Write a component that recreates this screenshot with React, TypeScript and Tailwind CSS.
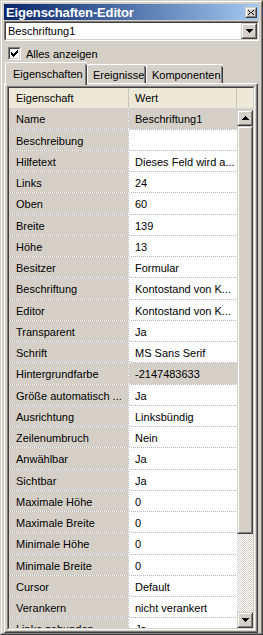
import React from "react";

type Row = { k: string; v: string; gray?: boolean };

const rows: Row[] = [
  { k: "Name", v: "Beschriftung1", gray: true },
  { k: "Beschreibung", v: "" },
  { k: "Hilfetext", v: "Dieses Feld wird a..." },
  { k: "Links", v: "24" },
  { k: "Oben", v: "60" },
  { k: "Breite", v: "139" },
  { k: "Höhe", v: "13" },
  { k: "Besitzer", v: "Formular" },
  { k: "Beschriftung", v: "Kontostand von K..." },
  { k: "Editor", v: "Kontostand von K..." },
  { k: "Transparent", v: "Ja" },
  { k: "Schrift", v: "MS Sans Serif" },
  { k: "Hintergrundfarbe", v: "-2147483633", gray: true },
  { k: "Größe automatisch ...", v: "Ja" },
  { k: "Ausrichtung", v: "Linksbündig" },
  { k: "Zeilenumbruch", v: "Nein" },
  { k: "Anwählbar", v: "Ja" },
  { k: "Sichtbar", v: "Ja" },
  { k: "Maximale Höhe", v: "0" },
  { k: "Maximale Breite", v: "0" },
  { k: "Minimale Höhe", v: "0" },
  { k: "Minimale Breite", v: "0" },
  { k: "Cursor", v: "Default" },
  { k: "Verankern", v: "nicht verankert" },
  { k: "Links gebunden", v: "Ja" },
];

function Raised({ className = "", children }: { className?: string; children?: React.ReactNode }) {
  return (
    <div className={"border border-t-[#d4d0c8] border-l-[#d4d0c8] border-r-[#404040] border-b-[#404040] " + className}>
      <div className="w-full h-full border border-t-white border-l-white border-r-[#808080] border-b-[#808080] bg-[#d4d0c8] flex items-center justify-center">
        {children}
      </div>
    </div>
  );
}

function TriDown() {
  return (
    <svg width="7" height="4" viewBox="0 0 7 4" shapeRendering="crispEdges">
      <path d="M0 0h7v1H0zM1 1h5v1H1zM2 2h3v1H2zM3 3h1v1H3z" fill="#000" />
    </svg>
  );
}

function TriUp() {
  return (
    <svg width="7" height="4" viewBox="0 0 7 4" shapeRendering="crispEdges">
      <path d="M3 0h1v1H3zM2 1h3v1H2zM1 2h5v1H1zM0 3h7v1H0z" fill="#000" />
    </svg>
  );
}

export default function App() {
  return (
    <div className="w-[263px] h-[635px] bg-[#d4d0c8] overflow-hidden font-['Liberation_Sans',Arial,sans-serif] text-[11px] leading-none text-black">
      <div className="h-full border border-t-[#d4d0c8] border-l-[#d4d0c8] border-r-[#404040] border-b-[#404040]">
        <div className="h-full border border-t-white border-l-white border-r-[#808080] border-b-[#808080] pt-[2px] px-[2px] pb-0 flex flex-col">
          {/* Title bar */}
          <div className="h-[16px] shrink-0 bg-gradient-to-r from-[#0a246a] to-[#a6caf0] flex items-center justify-between pl-[2px] pr-[2px]">
            <span className="text-white font-bold text-[13px] tracking-[-0.15px]">Eigenschaften-Editor</span>
            <Raised className="w-[12px] h-[11px]">
              <svg width="6" height="5" viewBox="0 0 6 5" shapeRendering="crispEdges">
                <path d="M0 0h1v1H0zM5 0h1v1H5zM1 1h1v1H1zM4 1h1v1H4zM2 2h2v1H2zM1 3h1v1H1zM4 3h1v1H4zM0 4h1v1H0zM5 4h1v1H5z" fill="#000" />
              </svg>
            </Raised>
          </div>

          {/* Combobox */}
          <div className="mt-[1px] h-[20px] shrink-0 border border-t-[#808080] border-l-[#808080] border-r-white border-b-white">
            <div className="h-full border border-t-[#404040] border-l-[#404040] border-r-[#d4d0c8] border-b-[#d4d0c8] bg-white flex items-center">
              <span className="flex-1 pl-[2px]">Beschriftung1</span>
              <Raised className="w-[16px] h-[16px]">
                <TriDown />
              </Raised>
            </div>
          </div>

          {/* Checkbox row */}
          <div className="h-[21px] shrink-0 flex items-start pt-[6px] pl-[4px]">
            <div className="w-[13px] h-[13px] border border-t-[#808080] border-l-[#808080] border-r-white border-b-white">
              <div className="w-full h-full border border-t-[#404040] border-l-[#404040] border-r-[#d4d0c8] border-b-[#d4d0c8] bg-white flex items-center justify-center">
                <svg width="7" height="7" viewBox="0 0 7 7" shapeRendering="crispEdges">
                  <path d="M6 0h1v3H6zM5 1h1v3H5zM4 2h1v3H4zM3 3h1v3H3zM2 4h1v3H2zM1 3h1v3H1zM0 2h1v3H0z" fill="#000" />
                </svg>
              </div>
            </div>
            <span className="ml-[5px] mt-[2px]">Alles anzeigen</span>
          </div>

          {/* Tabs */}
          <div className="h-[21px] shrink-0 flex items-end pl-[1px] relative z-10">
            <div className="h-[23px] -mb-[2px] w-[82px] bg-[#d4d0c8] border-t border-l border-t-white border-l-white rounded-tl-[2px] flex">
              <div className="flex-1 flex items-start pt-[6px] pl-[7px]">Eigenschaften</div>
              <div className="w-[1px] bg-[#808080] mt-[1px]" />
              <div className="w-[1px] bg-[#404040] mt-[2px]" />
            </div>
            <div className="h-[19px] w-[59px] bg-[#d4d0c8] border-t border-l border-t-white border-l-white rounded-tl-[2px] flex">
              <div className="flex-1 flex items-start pt-[5px] pl-[5px]">Ereignisse</div>
              <div className="w-[1px] bg-[#808080] mt-[1px]" />
              <div className="w-[1px] bg-[#404040] mt-[2px]" />
            </div>
            <div className="h-[19px] w-[77px] bg-[#d4d0c8] border-t border-l border-t-white border-l-white rounded-tl-[2px] flex">
              <div className="flex-1 flex items-start pt-[5px] pl-[5px]">Komponenten</div>
              <div className="w-[1px] bg-[#808080] mt-[1px]" />
              <div className="w-[1px] bg-[#404040] mt-[2px]" />
            </div>
          </div>

          {/* Panel */}
          <div className="flex-1 min-h-0 mr-[1px] border border-t-white border-l-white border-r-[#404040] border-b-[#404040]">
            <div className="h-full border border-l-[#d4d0c8] border-t-[#d4d0c8] border-r-[#808080] border-b-[#808080] p-[1px]">
              {/* Grid sunken */}
              <div className="h-full border border-t-[#808080] border-l-[#808080] border-r-white border-b-white">
                <div className="h-full border border-t-[#404040] border-l-[#404040] border-r-[#d4d0c8] border-b-[#d4d0c8] flex flex-col overflow-hidden">
                  {/* Header */}
                  <div className="h-[20px] shrink-0 bg-[#ece9d8] flex">
                    <div className="w-[120px] flex items-center pl-[7px] border-r border-r-[#cbc7b8]">Eigenschaft</div>
                    <div className="w-[108px] flex items-center pl-[6px] border-r border-r-[#cbc7b8]">Wert</div>
                    <div className="flex-1" />
                  </div>
                  {/* Body */}
                  <div className="flex-1 min-h-0 flex">
                    <div className="w-[228px] overflow-hidden">
                      {rows.map((r, i) => (
                        <div key={i} className={(i % 4 === 0 ? "h-[22px]" : "h-[21px]") + " flex flex-col"}>
                          <div className="flex-1 flex">
                            <div className="w-[119px] bg-[#d4d0c8] flex items-center pt-[2px] pl-[7px] whitespace-nowrap overflow-hidden">{r.k}</div>
                            <div className="w-[1px] bg-[repeating-linear-gradient(180deg,#ffffff_0_1px,#b4b4b4_1px_2px)]" />
                            <div className={(r.gray ? "bg-[#d4d0c8] " : "bg-white ") + "w-[108px] flex items-center pt-[2px] pl-[6px] whitespace-nowrap overflow-hidden"}>{r.v}</div>
                          </div>
                          <div className="h-[1px] bg-[repeating-linear-gradient(90deg,#b4b4b4_0_1px,#ffffff_1px_2px)]" />
                        </div>
                      ))}
                    </div>
                    {/* Scrollbar */}
                    <div className="w-[16px] flex flex-col pt-[2px]">
                      <Raised className="h-[16px] shrink-0">
                        <TriUp />
                      </Raised>
                      <Raised className="h-[408px] shrink-0" />
                      <div className="flex-1 bg-[repeating-conic-gradient(#d4d0c8_0%_25%,#ffffff_0%_50%)] bg-[length:2px_2px]" />
                      <Raised className="h-[16px] shrink-0">
                        <TriDown />
                      </Raised>
                    </div>
                  </div>
                </div>
              </div>
            </div>
          </div>
        </div>
      </div>
    </div>
  );
}
